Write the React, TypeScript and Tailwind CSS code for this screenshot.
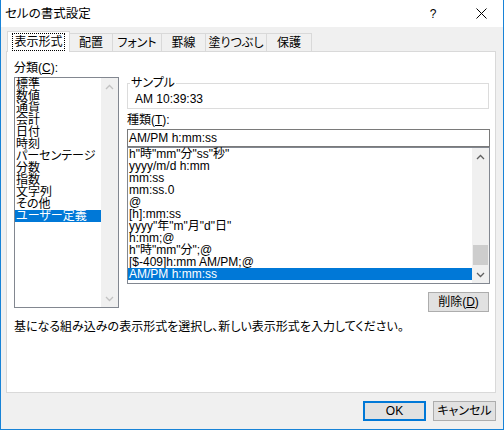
import React from 'react';

const categories = ['標準', '数値', '通貨', '会計', '日付', '時刻', 'パーセンテージ', '分数', '指数', '文字列', 'その他', 'ユーザー定義'];

const formats = [
  'h"時"mm"分"ss"秒"',
  'yyyy/m/d h:mm',
  'mm:ss',
  'mm:ss.0',
  '@',
  '[h]:mm:ss',
  'yyyy"年"m"月"d"日"',
  'h:mm;@',
  'h"時"mm"分";@',
  '[$-409]h:mm AM/PM;@',
  'AM/PM h:mm:ss',
];

const tabs = [
  { label: '配置', w: 'w-[43px]' },
  { label: 'フォント', w: 'w-[49px]' },
  { label: '罫線', w: 'w-[44px]' },
  { label: '塗りつぶし', w: 'w-[61px]' },
  { label: '保護', w: 'w-[45px]' },
];

function Chevron({ down, color }: { down?: boolean; color: string }) {
  return (
    <svg width="9" height="6" viewBox="0 0 9 6">
      <polyline
        points={down ? '1,1 4.5,4.5 8,1' : '1,5 4.5,1.5 8,5'}
        fill="none"
        stroke={color}
        strokeWidth="1.3"
      />
    </svg>
  );
}

export default function App() {
  return (
    <div className="w-[504px] h-[430px] flex flex-col bg-[#f0f0f0] border-x border-b border-[#1883d7] text-[12px] leading-[12px] text-black font-['Liberation_Sans','Noto_Sans_CJK_JP',sans-serif] [font-feature-settings:'palt'] overflow-hidden">
      {/* title bar */}
      <div className="h-[27px] shrink-0 bg-white flex items-center pl-[4px]">
        <span className="text-[12.5px] flex-1">セルの書式設定</span>
        <span className="w-[12px] text-center mr-[37px]">?</span>
        <svg width="11" height="11" viewBox="0 0 11 11" className="mr-[16px]">
          <path d="M0.5 0.5 L10.5 10.5 M10.5 0.5 L0.5 10.5" stroke="#000" strokeWidth="1" />
        </svg>
      </div>

      {/* tabs */}
      <div className="mt-[4px] h-[20px] flex items-end ml-[6px]">
        <div className="relative z-10 -mb-px w-[63px] h-[21px] bg-white border-l border-t border-r border-[#d9d9d9] flex items-center justify-center">
          <span className="outline-1 outline-dotted outline-black px-[1px] py-[2px]">表示形式</span>
        </div>
        {tabs.map((t) => (
          <div
            key={t.label}
            className={`${t.w} h-[18px] border-t border-r border-[#d9d9d9] bg-[#f0f0f0] flex items-center justify-center`}
          >
            {t.label}
          </div>
        ))}
      </div>

      {/* panel */}
      <div className="ml-[5px] w-[490px] h-[342px] shrink-0 bg-white border border-[#d9d9d9] flex flex-col">
        <div className="flex">
          {/* left column */}
          <div className="ml-[7px] w-[105px] flex flex-col">
            <div className="mt-[10px]">
              分類(<span className="underline">C</span>):
            </div>
            <div className="mt-[3px] h-[231px] border border-[#828790] flex">
              <div className="flex-1 flex flex-col">
                {categories.map((c, i) => (
                  <div
                    key={c}
                    className={`h-[12px] pl-[1px] whitespace-nowrap ${i === categories.length - 1 ? 'bg-[#0078d7] text-white' : ''}`}
                  >
                    {c}
                  </div>
                ))}
              </div>
              <div className="w-[17px] bg-[#f0f0f0] flex flex-col">
                <div className="h-[17px] flex items-center justify-center">
                  <Chevron color="#c2c2c2" />
                </div>
                <div className="flex-1" />
                <div className="h-[17px] flex items-center justify-center">
                  <Chevron down color="#c2c2c2" />
                </div>
              </div>
            </div>
          </div>

          {/* right column */}
          <div className="ml-[8px] w-[363px] flex flex-col">
            <fieldset className="mt-[25px] w-[362px] border border-[#dcdcdc]">
              <legend className="ml-[2px] px-[1px]">サンプル</legend>
              <div className="pl-[7px] pt-[4px] pb-[3px]">AM 10:39:33</div>
            </fieldset>
            <div className="mt-[5px]">
              種類(<span className="underline">T</span>):
            </div>
            <div className="mt-[3px] h-[18px] border border-[#7a7a7a] flex items-center pl-[1px]">AM/PM h:mm:ss</div>
            <div className="h-[137px] border border-[#828790] flex">
              <div className="flex-1 flex flex-col">
                {formats.map((f, i) => (
                  <div
                    key={f}
                    className={`h-[12px] pl-[1px] whitespace-nowrap ${i === formats.length - 1 ? 'bg-[#0078d7] text-white' : ''}`}
                  >
                    {f}
                  </div>
                ))}
              </div>
              <div className="w-[17px] bg-[#f0f0f0] flex flex-col">
                <div className="h-[17px] flex items-center justify-center">
                  <Chevron color="#606060" />
                </div>
                <div className="flex-1 flex flex-col justify-end pb-[1px]">
                  <div className="h-[20px] mx-[1px] bg-[#cdcdcd]" />
                </div>
                <div className="h-[17px] flex items-center justify-center">
                  <Chevron down color="#606060" />
                </div>
              </div>
            </div>
            <div className="mt-[8px] flex justify-end mr-[1px]">
              <button className="w-[61px] h-[20px] bg-[#e1e1e1] border border-[#adadad] flex items-center justify-center">
                削除(<span className="underline">D</span>)
              </button>
            </div>
          </div>
        </div>
        <div className="mt-[9px] ml-[7px]">基になる組み込みの表示形式を選択し、新しい表示形式を入力してください。</div>
      </div>

      {/* footer buttons */}
      <div className="mt-[8px] flex justify-end gap-[7px] pr-[7px]">
        <button className="w-[63px] h-[20px] bg-[#e1e1e1] border-2 border-[#0078d7] flex items-center justify-center">OK</button>
        <button className="w-[63px] h-[20px] bg-[#e1e1e1] border border-[#adadad] flex items-center justify-center">キャンセル</button>
      </div>
    </div>
  );
}
